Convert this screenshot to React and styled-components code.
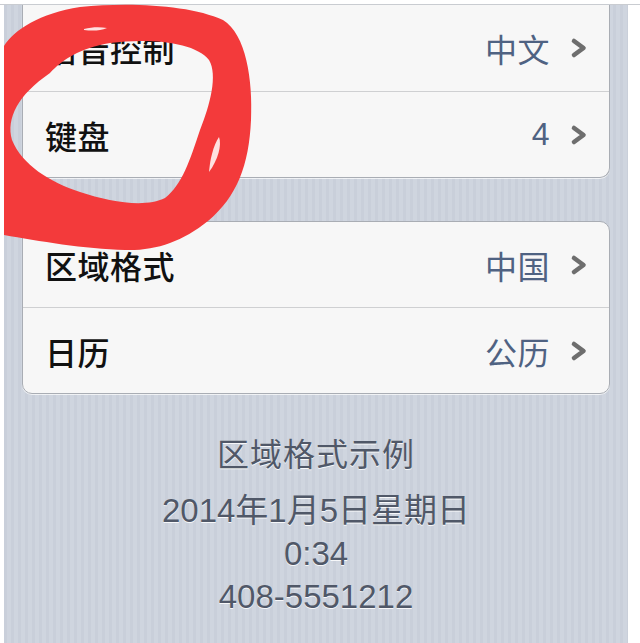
import React from 'react';
import styled, { createGlobalStyle } from 'styled-components';

const GlobalStyle = createGlobalStyle`
    html, body {
        margin: 0;
        padding: 0;
        background: #ffffff;
    }
    body {
        font-family: "Liberation Sans", "Noto Sans CJK SC", sans-serif;
        -webkit-font-smoothing: antialiased;
    }
`

const Page = styled.div`
    position: relative;
    width: 640px;
    height: 643px;
    overflow: hidden;
    padding-top: 4px;
    box-sizing: border-box;
    &::before {
        content: '';
        position: absolute;
        top: 4px;
        left: 0;
        right: 0;
        height: 1px;
        background: #c9ccd1;
    }
`

const Screen = styled.div`
    margin: 1px 12px 0 4px;
    height: 638px;
    padding: 0 18px;
    box-sizing: border-box;
    background-color: #cdd3dd;
    background-image: repeating-linear-gradient(
        90deg,
        #c9cfda 0px,
        #c9cfda 3px,
        #cfd5df 3px,
        #cfd5df 7px
    );
    display: flex;
    flex-direction: column;
`

const Group = styled.div`
    background: #f7f7f7;
    border: 1px solid #a9adb4;
    border-radius: 10px;
    box-shadow: 0 1px 0 rgba(255, 255, 255, 0.7);
    margin-bottom: 43px;
    ${props => props.$cut && `
        border-top: none;
        border-radius: 0 0 10px 10px;
    `}
`

const Row = styled.div`
    display: flex;
    align-items: center;
    height: ${props => props.$h || 85}px;
    padding: 0 21px 0 22px;
    & + & {
        border-top: 1px solid #cfd0d2;
    }
`

const Label = styled.span`
    flex: 1;
    font-family: "Noto Sans CJK SC", sans-serif;
    font-size: 32px;
    font-weight: 500;
    color: #111111;
    letter-spacing: 0.5px;
`

const Value = styled.span`
    font-family: "Liberation Sans", "Noto Sans CJK SC", sans-serif;
    font-size: 32px;
    color: #4f6282;
    margin-right: 20px;
    letter-spacing: 0.5px;
`

const Footer = styled.div`
    display: flex;
    flex-direction: column;
    align-items: center;
    margin-top: -6px;
    color: #505868;
    text-shadow: 0 1px 0 rgba(255, 255, 255, 0.85);
`

const FooterTitle = styled.div`
    font-family: "Noto Sans CJK SC", sans-serif;
    font-size: 32px;
    line-height: 43px;
    letter-spacing: 1px;
    margin-bottom: 15px;
`

const FooterLine = styled.div`
    font-size: 33px;
    line-height: 43px;
`

const Scribble = styled.svg`
    position: absolute;
    top: 0;
    left: 0;
    pointer-events: none;
`

function Chevron() {
    return (
        <svg width="18" height="22" viewBox="0 0 18 22">
            <polyline points="4,4 13.5,11 4,18" fill="none" stroke="#6e6e6e" strokeWidth="4.6" strokeLinecap="round" strokeLinejoin="round" />
        </svg>
    )
}

function SettingRow({ label, value, h }) {
    return (
        <Row $h={h}>
            <Label>{label}</Label>
            <Value>{value}</Value>
            <Chevron />
        </Row>
    )
}

export default function App() {
    return (
        <Page>
            <GlobalStyle />
            <Screen>
                <Group $cut>
                    <SettingRow label="语音控制" value="中文" h={86} />
                    <SettingRow label="键盘" value="4" />
                </Group>
                <Group>
                    <SettingRow label="区域格式" value="中国" />
                    <SettingRow label="日历" value="公历" />
                </Group>
                <Footer>
                    <FooterTitle>区域格式示例</FooterTitle>
                    <FooterLine>2014年1月5日星期日</FooterLine>
                    <FooterLine>0:34</FooterLine>
                    <FooterLine>408-5551212</FooterLine>
                </Footer>
            </Screen>
            <Scribble width="260" height="260" viewBox="0 0 260 260">
                <path
                    fillRule="evenodd"
                    fill="#f33a3b"
                    d="M4,46 C14,30 40,13 80,7 C130,2 190,5 223,20 C246,34 253,80 251,120 C249,165 237,197 208,221 C182,242 155,251 125,250 C85,249 38,241 4,235 Z
                       M50,73 C62,60 80,48 110,43 C150,38 195,42 209,60 C218,75 210,105 200,130 C190,160 182,185 165,198 C145,208 110,202 80,192 C50,182 22,165 12,140 C6,118 18,95 50,73 Z"
                />
                <path d="M84,29 C92,27 100,27 107,28 C100,31 92,31 84,30 Z" fill="#ffffff" opacity="0.85" />
                <path d="M219,137 C222,145 218,160 209,172 C210,160 213,146 219,137 Z" fill="#ffffff" opacity="0.85" />
            </Scribble>
        </Page>
    )
}
